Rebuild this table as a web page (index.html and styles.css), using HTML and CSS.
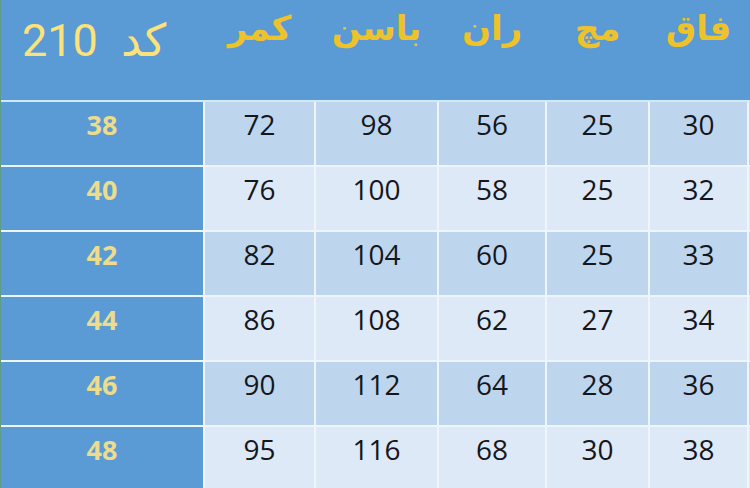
FILE: index.html
```html
<!DOCTYPE html>
<html lang="fa">
<head>
<meta charset="utf-8">
<title>جدول سایز کد 210</title>
<link rel="stylesheet" href="styles.css">
</head>
<body>
<div class="sheet">
  <div class="head">
    <div class="code" dir="rtl">کد 210</div>
    <div class="label">کمر</div>
    <div class="label">باسن</div>
    <div class="label">ران</div>
    <div class="label">مچ</div>
    <div class="label">فاق</div>
    <div class="label"></div>
  </div>
  <div class="body">
    <div class="size">38</div><div class="c odd">72</div><div class="c odd">98</div><div class="c odd">56</div><div class="c odd">25</div><div class="c odd">30</div><div class="c odd"></div>
    <div class="size">40</div><div class="c even">76</div><div class="c even">100</div><div class="c even">58</div><div class="c even">25</div><div class="c even">32</div><div class="c even"></div>
    <div class="size">42</div><div class="c odd">82</div><div class="c odd">104</div><div class="c odd">60</div><div class="c odd">25</div><div class="c odd">33</div><div class="c odd"></div>
    <div class="size">44</div><div class="c even">86</div><div class="c even">108</div><div class="c even">62</div><div class="c even">27</div><div class="c even">34</div><div class="c even"></div>
    <div class="size">46</div><div class="c odd">90</div><div class="c odd">112</div><div class="c odd">64</div><div class="c odd">28</div><div class="c odd">36</div><div class="c odd"></div>
    <div class="size">48</div><div class="c even">95</div><div class="c even">116</div><div class="c even">68</div><div class="c even">30</div><div class="c even">38</div><div class="c even"></div>
  </div>
</div>
</body>
</html>
```
FILE: styles.css
```css
html, body {
  margin: 0;
  padding: 0;
  width: 750px;
  height: 488px;
  overflow: hidden;
  background: #5b9bd5;
}

.sheet {
  width: 750px;
  height: 488px;
  display: flex;
  flex-direction: column;
  gap: 2px;
  background: #cfeaf4;
  border-left: 1px solid #5f9c88;
  box-sizing: border-box;
  overflow: hidden;
}

.head,
.body {
  display: grid;
  grid-template-columns: 202px 109px 121px 106px 101px 97px 1fr;
  column-gap: 2px;
}

.head {
  height: 100px;
  flex: none;
  background: #5b9bd5;
}

.code {
  text-align: left;
  padding: 13px 0 0 21px;
  font-family: Roboto, "DejaVu Sans", sans-serif;
  font-size: 45px;
  line-height: 56px;
  word-spacing: 12px;
  color: #fbe27a;
  white-space: nowrap;
}

.label {
  text-align: center;
  padding-top: 7px;
  font-family: "DejaVu Sans", sans-serif;
  font-weight: bold;
  font-size: 34px;
  line-height: 42px;
  color: #eec22a;
}

.body {
  row-gap: 2px;
  grid-auto-rows: 63px;
  background: #eef6fb;
}

.size {
  background: #5b9bd5;
  text-align: center;
  padding-top: 4px;
  font-family: "Open Sans", sans-serif;
  font-weight: bold;
  font-size: 27px;
  line-height: 38px;
  color: #ecdc8c;
}

.c {
  text-align: center;
  padding-top: 3px;
  font-family: "Open Sans", sans-serif;
  font-size: 28px;
  line-height: 38px;
  color: #16161c;
}

.odd {
  background: #bdd6ee;
}

.even {
  background: #dde9f6;
}
```
